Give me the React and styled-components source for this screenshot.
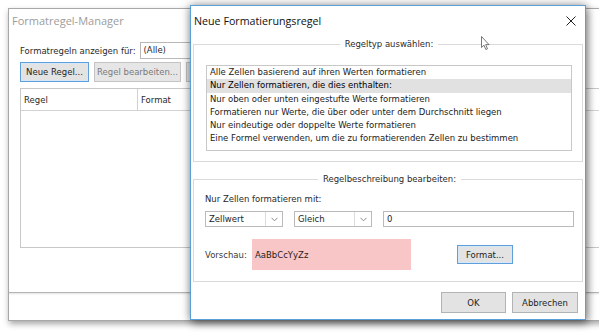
import React from "react";
import styled, { createGlobalStyle } from "styled-components";

const GlobalStyle = createGlobalStyle`
  html, body {
    margin: 0;
    padding: 0;
    background: #fff;
  }
  body {
    font-family: "DejaVu Sans", Verdana, sans-serif;
    font-size: 8.5px;
    color: #1e1e1e;
  }
`;

const Desktop = styled.div`
  position: relative;
  width: 599px;
  height: 333px;
  overflow: hidden;
  background: #fff;
`;

/* ---------- background window: Formatregel-Manager ---------- */

const ManagerWindow = styled.section`
  position: absolute;
  left: 8px;
  top: 8px;
  width: 620px;
  height: 313px;
  box-sizing: border-box;
  border: 1px solid #a8a8a8;
  background: #fff;
  box-shadow: 1px 3px 6px rgba(0, 0, 0, 0.35);
  display: flex;
  flex-direction: column;
`;

const ManagerTitle = styled.div`
  height: 22px;
  display: flex;
  align-items: center;
  padding-left: 3px;
  font-family: "Open Sans", "Noto Sans", sans-serif;
  font-size: 11px;
  color: #9c9c9c;
`;

const ManagerBody = styled.div`
  flex: 1;
  display: flex;
  flex-direction: column;
  padding-left: 11px;
`;

const FilterRow = styled.div`
  margin-top: 11px;
  height: 17px;
  display: flex;
  align-items: center;
  gap: 4px;
  color: #2a2a2a;
`;

const FilterBox = styled.div`
  width: 120px;
  height: 17px;
  box-sizing: border-box;
  border: 1px solid #b8b8b8;
  padding-left: 3px;
  line-height: 15px;
`;

const ButtonRow = styled.div`
  margin-top: 3px;
  display: flex;
  gap: 5px;
`;

const Button = styled.button`
  width: ${(p) => p.$w}px;
  height: ${(p) => p.$h || 20}px;
  box-sizing: border-box;
  padding: 0;
  font-family: "DejaVu Sans", Verdana, sans-serif;
  font-size: 8.5px;
  color: ${(p) => (p.$disabled ? "#7a7a7a" : "#1e1e1e")};
  background: ${(p) => (p.$disabled ? "#e6e6e6" : "#e3e3e3")};
  border: 1px solid ${(p) => (p.$focus ? "#5e9fdc" : p.$disabled ? "#c4c4c4" : "#b3b3b3")};
  box-shadow: ${(p) => (p.$focus ? "inset 0 0 0 1px #d6e7f7" : "none")};
  flex: none;
`;

const RuleTable = styled.div`
  margin-top: 6px;
  height: 160px;
  box-sizing: border-box;
  border: 1px solid #c8c8c8;
  border-right: none;
`;

const RuleHeader = styled.div`
  height: 21px;
  display: grid;
  grid-template-columns: 116px 1fr;
  border-bottom: 1px solid #d2d2d2;
`;

const HeaderCell = styled.div`
  display: flex;
  align-items: center;
  padding-left: 3px;
  color: #2a2a2a;
  & + & {
    border-left: 1px solid #d2d2d2;
  }
`;

const ManagerFooter = styled.div`
  margin-top: auto;
  margin-left: -11px;
  height: 27px;
  border-top: 1px solid #b4b4b4;
  box-shadow: inset 0 2px 2px -1px rgba(0, 0, 0, 0.12);
`;

/* ---------- front dialog: Neue Formatierungsregel ---------- */

const Dialog = styled.section`
  position: absolute;
  left: 190px;
  top: 5px;
  width: 396px;
  height: 315px;
  box-sizing: border-box;
  border: 1px solid #5b9fd9;
  background: #fff;
  box-shadow: 0 0 9px rgba(0, 0, 0, 0.4), 2px 4px 8px rgba(0, 0, 0, 0.3);
  display: flex;
  flex-direction: column;
`;

const TitleBar = styled.div`
  height: 30px;
  display: flex;
  align-items: center;
  justify-content: space-between;
  padding: 0 9px 0 3px;
  font-family: "Open Sans", "Noto Sans", sans-serif;
  font-size: 10.7px;
  color: #111;
`;

const CloseIcon = styled.svg`
  width: 10px;
  height: 10px;
  display: block;
`;

const Group = styled.fieldset`
  margin: ${(p) => p.$top}px 2px 0;
  padding: ${(p) => p.$pad};
  border: 1px solid #dadada;
  min-width: 0;
`;

const Legend = styled.legend`
  margin: 0 auto;
  padding: 0 5px;
  line-height: 12px;
  color: #2a2a2a;
`;

const ListBox = styled.ul`
  list-style: none;
  margin: 0;
  padding: 0;
  height: 86px;
  box-sizing: border-box;
  border: 1px solid #c8c8c8;
`;

const ListItem = styled.li`
  height: 13.3px;
  line-height: 13.3px;
  padding-left: 3px;
  white-space: nowrap;
  color: ${(p) => (p.$selected ? "#000" : "#222")};
  background: ${(p) => (p.$selected ? "#e1e1e1" : "transparent")};
`;

const FieldLabel = styled.div`
  line-height: 12px;
  color: #2a2a2a;
`;

const ControlRow = styled.div`
  margin-top: 6px;
  display: flex;
  gap: 11px;
`;

const Select = styled.div`
  width: ${(p) => p.$w}px;
  height: 16px;
  box-sizing: border-box;
  border: 1px solid #bababa;
  display: flex;
  background: #fff;
`;

const SelectValue = styled.span`
  flex: 1;
  padding-left: 3px;
  line-height: 14px;
`;

const SelectArrow = styled.span`
  width: 16px;
  border-left: 1px solid #dcdcdc;
  display: flex;
  align-items: center;
  justify-content: center;
`;

const TextInput = styled.div`
  flex: 1;
  height: 16px;
  box-sizing: border-box;
  border: 1px solid #bababa;
  padding-left: 3px;
  line-height: 14px;
`;

const PreviewRow = styled.div`
  margin-top: 12px;
  display: flex;
  align-items: center;
`;

const PreviewLabel = styled.span`
  width: 47px;
  color: #3a3a3a;
`;

const PreviewSwatch = styled.div`
  width: 159px;
  height: 31px;
  background: #f8c6c6;
  display: flex;
  align-items: center;
  padding-left: 3px;
  box-sizing: border-box;
  color: #2a1a1a;
  margin-right: 46px;
`;

const DialogFooter = styled.div`
  margin-top: auto;
  padding: 0 7px 6px 0;
  display: flex;
  justify-content: flex-end;
  gap: 6px;
`;

const Pointer = styled.svg`
  position: absolute;
  left: 481px;
  top: 36px;
  width: 10px;
  height: 15px;
`;

const Chevron = () => (
  <svg width="7" height="5" viewBox="0 0 7 5">
    <path d="M0.5 0.8 L3.5 3.8 L6.5 0.8" fill="none" stroke="#8a8a8a" strokeWidth="1" />
  </svg>
);

const ruleTypes = [
  "Alle Zellen basierend auf ihren Werten formatieren",
  "Nur Zellen formatieren, die dies enthalten:",
  "Nur oben oder unten eingestufte Werte formatieren",
  "Formatieren nur Werte, die über oder unter dem Durchschnitt liegen",
  "Nur eindeutige oder doppelte Werte formatieren",
  "Eine Formel verwenden, um die zu formatierenden Zellen zu bestimmen",
];

export default function App() {
  return (
    <Desktop>
      <GlobalStyle />

      <ManagerWindow>
        <ManagerTitle>Formatregel-Manager</ManagerTitle>
        <ManagerBody>
          <FilterRow>
            <span>Formatregeln anzeigen für:</span>
            <FilterBox>(Alle)</FilterBox>
          </FilterRow>
          <ButtonRow>
            <Button $w={69} $focus>Neue Regel...</Button>
            <Button $w={87} $disabled>Regel bearbeiten...</Button>
            <Button $w={80} $disabled aria-label="Regel löschen" />
          </ButtonRow>
          <RuleTable>
            <RuleHeader>
              <HeaderCell>Regel</HeaderCell>
              <HeaderCell>Format</HeaderCell>
            </RuleHeader>
          </RuleTable>
          <ManagerFooter />
        </ManagerBody>
      </ManagerWindow>

      <Dialog>
        <TitleBar>
          <span>Neue Formatierungsregel</span>
          <CloseIcon viewBox="0 0 10 10">
            <path d="M0.5 0.5 L9.5 9.5 M9.5 0.5 L0.5 9.5" stroke="#222" strokeWidth="1" />
          </CloseIcon>
        </TitleBar>

        <Group $top={2} $pad="15px 10px 10px 12px">
          <Legend>Regeltyp auswählen:</Legend>
          <ListBox>
            {ruleTypes.map((t, i) => (
              <ListItem key={t} $selected={i === 1}>
                {t}
              </ListItem>
            ))}
          </ListBox>
        </Group>

        <Group $top={11} $pad="8px 8px 11px 11px">
          <Legend>Regelbeschreibung bearbeiten:</Legend>
          <FieldLabel>Nur Zellen formatieren mit:</FieldLabel>
          <ControlRow>
            <Select $w={78}>
              <SelectValue>Zellwert</SelectValue>
              <SelectArrow>
                <Chevron />
              </SelectArrow>
            </Select>
            <Select $w={78}>
              <SelectValue>Gleich</SelectValue>
              <SelectArrow>
                <Chevron />
              </SelectArrow>
            </Select>
            <TextInput>0</TextInput>
          </ControlRow>
          <PreviewRow>
            <PreviewLabel>Vorschau:</PreviewLabel>
            <PreviewSwatch>AaBbCcYyZz</PreviewSwatch>
            <Button $w={56} $h={19} $focus>Format...</Button>
          </PreviewRow>
        </Group>

        <DialogFooter>
          <Button $w={65} $h={21}>OK</Button>
          <Button $w={66} $h={21}>Abbrechen</Button>
        </DialogFooter>
      </Dialog>

      <Pointer viewBox="0 0 10 15">
        <path
          d="M0.5 0.5 L0.5 11.5 L3 9.2 L4.8 13.5 L6.5 12.8 L4.7 8.6 L8 8.6 Z"
          fill="#fff"
          stroke="#555"
          strokeWidth="0.8"
          strokeLinejoin="round"
        />
      </Pointer>
    </Desktop>
  );
}
